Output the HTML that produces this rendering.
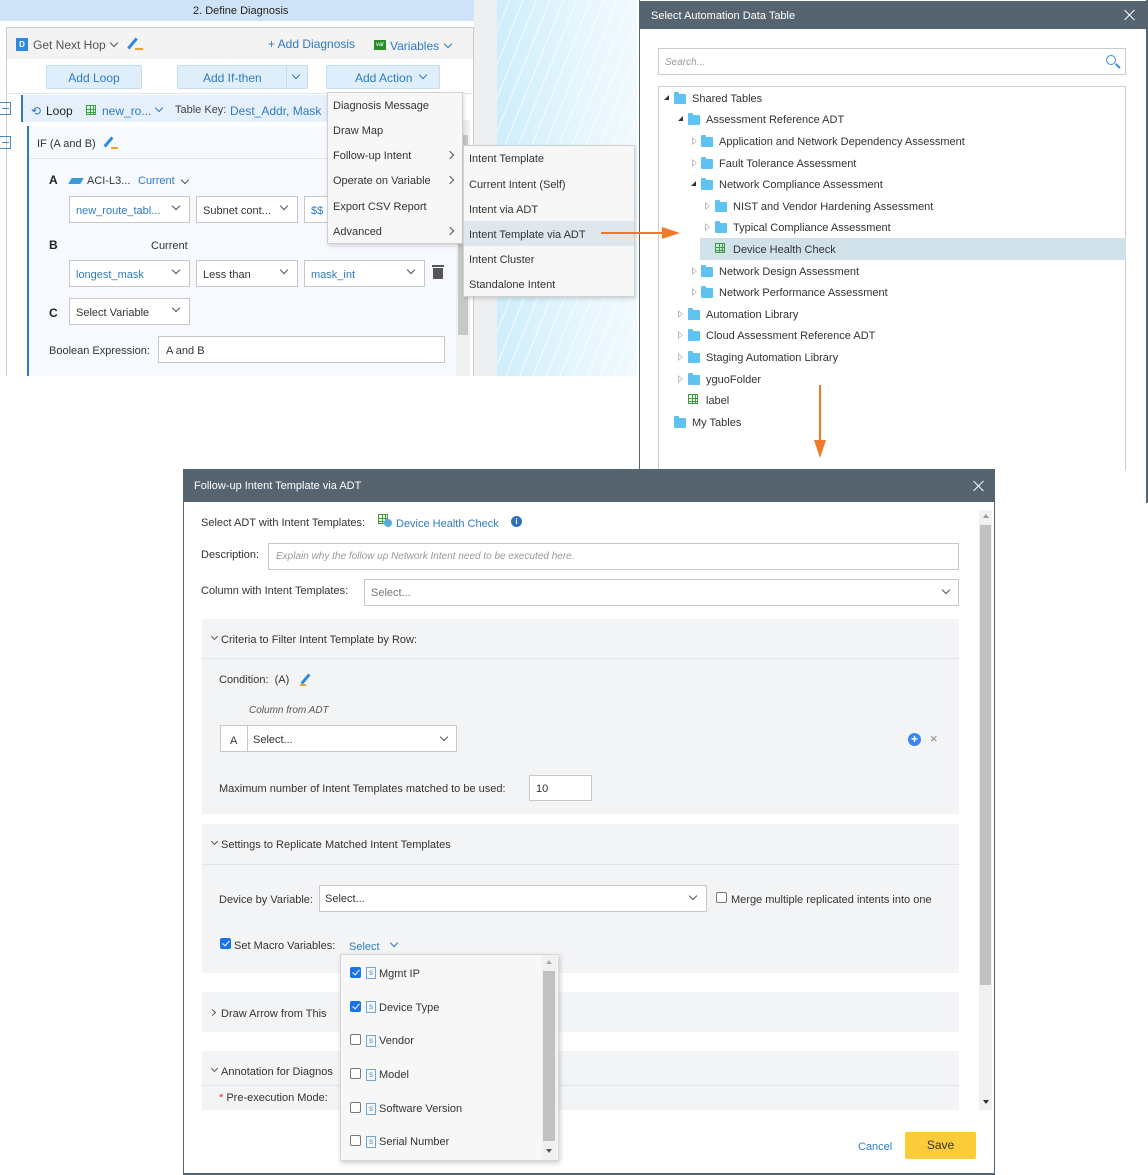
<!DOCTYPE html>
<html><head><meta charset="utf-8">
<style>
*{box-sizing:border-box;margin:0;padding:0}
body{width:1148px;height:1175px;position:relative;background:#fff;font-family:"Liberation Sans",sans-serif;font-size:11px;color:#333;overflow:hidden}
.a{position:absolute;white-space:nowrap}
.blue{color:#2f7bc0}
.box{position:absolute;border:1px solid #c8c8c8;background:#fff}
.chev{position:absolute;width:6px;height:6px;border-right:1.3px solid #555;border-bottom:1.3px solid #555;transform:rotate(45deg)}
.chr{position:absolute;width:6px;height:6px;border-right:1.3px solid #555;border-bottom:1.3px solid #555;transform:rotate(-45deg)}
.fold{position:absolute;width:12px;height:10px;background:#5ec3f2;border-radius:1px}
.fold:before{content:"";position:absolute;left:0;top:-2px;width:5px;height:3px;background:#5ec3f2;border-radius:1px 1px 0 0}
.tri-d{position:absolute;width:0;height:0;border-left:5px solid transparent;border-bottom:5px solid #333}
.tri-r{position:absolute;width:0;height:0;border-top:4px solid transparent;border-bottom:4px solid transparent;border-left:5px solid #bbb}
.tri-r:after{content:"";position:absolute;left:-4px;top:-2px;border-top:2px solid transparent;border-bottom:2px solid transparent;border-left:3px solid #fff}
.btn{position:absolute;background:#dfeefb;border:1px solid #c6dcf1;border-radius:2px;color:#2f7bc0;font-size:12px;text-align:center;line-height:22px}
.cb{position:absolute;width:11px;height:11px;border:1px solid #777;border-radius:2px;background:#fff}
.cbc{position:absolute;width:11px;height:11px;border-radius:2px;background:#1a73e8}
.cbc:after{content:"";position:absolute;left:3.5px;top:1px;width:3px;height:6px;border-right:1.6px solid #fff;border-bottom:1.6px solid #fff;transform:rotate(40deg)}
.sv{position:absolute;width:10px;height:12px;border:1px solid #6aa6d6;color:#4a8cc8;font-size:8px;line-height:10px;text-align:center}
.sec{position:absolute;background:#f3f4f6}
.grid{position:absolute;width:10px;height:10px;border:1px solid #3aa13a;background:linear-gradient(#3aa13a,#3aa13a) 3px 0/1px 10px no-repeat,linear-gradient(#3aa13a,#3aa13a) 6px 0/1px 10px no-repeat,linear-gradient(#3aa13a,#3aa13a) 0 3px/10px 1px no-repeat,linear-gradient(#3aa13a,#3aa13a) 0 6px/10px 1px no-repeat}
.x{position:absolute;width:12px;height:12px}
.x:before,.x:after{content:"";position:absolute;left:5px;top:-1px;width:1.3px;height:14px;background:#fff;transform:rotate(45deg)}
.x:after{transform:rotate(-45deg)}
</style></head><body>

<!-- LEFT PANEL -->
<div class="a" style="left:0;top:0;width:474px;height:21px;background:#cfe3f8"></div>
<div class="a" style="left:193px;top:5px;font-size:11px;color:#222">2. Define Diagnosis</div>
<div class="a" style="left:474px;top:0;width:23px;height:376px;background:#eeeff1"></div>
<div class="a" style="left:497px;top:0;width:140px;height:376px;background:repeating-linear-gradient(112deg,rgba(255,255,255,0) 0 11px,rgba(255,255,255,.55) 11px 12.5px),linear-gradient(90deg,#cdeefb,#e6f6fd 60%,#f0fafe)"></div>
<div class="a" style="left:6px;top:27px;width:468px;height:349px;border-left:1px solid #ccc;border-top:1px solid #ccc;border-right:1px solid #ccc;background:#fff"></div>
<div class="a" style="left:7px;top:28px;width:466px;height:31px;background:#f3f3f3"></div>
<div class="a" style="left:16px;top:38px;width:12px;height:13px;background:#2d8ae0;color:#fff;font-size:8px;font-weight:bold;text-align:center;line-height:13px">D</div>
<div class="a" style="left:33px;top:38px;font-size:12px;color:#555">Get Next Hop</div>
<div class="chev" style="left:111px;top:40px"></div>
<div class="a" style="left:131px;top:37px;width:3px;height:13px;background:#2d8ae0;transform:rotate(40deg)"></div>
<div class="a" style="left:135px;top:48px;width:8px;height:2px;background:#f0a030"></div>
<div class="a blue" style="left:268px;top:37px;font-size:12px">+ Add Diagnosis</div>
<div class="a" style="left:374px;top:40px;width:12px;height:10px;background:#2a8c2a;color:#fff;font-size:6px;line-height:10px;text-align:center">var</div>
<div class="a blue" style="left:390px;top:39px;font-size:12px">Variables</div>
<div class="chev" style="left:445px;top:41px;border-color:#2f7bc0"></div>
<div class="btn" style="left:46px;top:65px;width:96px;height:24px;line-height:24px">Add Loop</div>
<div class="btn" style="left:177px;top:65px;width:131px;height:24px;line-height:24px;text-align:left;padding-left:25px">Add If-then</div>
<div class="a" style="left:286px;top:66px;width:1px;height:22px;background:#c6dcf1"></div>
<div class="chev" style="left:293px;top:72px;border-color:#2f7bc0"></div>
<div class="btn" style="left:326px;top:65px;width:114px;height:24px;line-height:24px;text-align:left;padding-left:28px">Add Action</div>
<div class="chev" style="left:420px;top:72px;border-color:#2f7bc0"></div>
<div class="a" style="left:7px;top:93px;width:466px;height:1px;background:#dde6ef"></div>
<div class="a" style="left:21px;top:95px;width:435px;height:27px;background:#e6f0fb;border-left:2px solid #2f7bc0"></div>
<div class="a" style="left:0;top:102px;width:11px;height:13px;border:1px solid #4a8cc8;border-left:none"></div>
<div class="a" style="left:2px;top:108px;width:7px;height:1px;background:#4a8cc8"></div>
<div class="a" style="left:31px;top:104px;color:#2f7bc0;font-size:12px">⟲</div>
<div class="a" style="left:46px;top:104px;font-size:12px;color:#222">Loop</div>
<div class="grid" style="left:86px;top:105px"></div>
<div class="a blue" style="left:102px;top:104px;font-size:12px">new_ro...</div>
<div class="chev" style="left:156px;top:105px;border-color:#2f7bc0"></div>
<div class="a" style="left:175px;top:104px;font-size:11px;color:#444">Table Key:</div>
<div class="a blue" style="left:230px;top:104px;font-size:12px">Dest_Addr, Mask</div>
<div class="a" style="left:27px;top:126px;width:429px;height:250px;background:#f6f9fd;border-left:2px solid #2f7bc0"></div>
<div class="a" style="left:29px;top:158px;width:427px;height:1px;background:#dde6ef"></div>
<div class="a" style="left:0;top:136px;width:11px;height:13px;border:1px solid #4a8cc8;border-left:none"></div>
<div class="a" style="left:2px;top:142px;width:7px;height:1px;background:#4a8cc8"></div>
<div class="a" style="left:37px;top:138px;font-size:11px;color:#333">IF (A and B)</div>
<div class="a" style="left:107px;top:136px;width:3px;height:12px;background:#2d8ae0;transform:rotate(40deg)"></div>
<div class="a" style="left:111px;top:147px;width:7px;height:2px;background:#f0a030"></div>
<div class="a" style="left:456px;top:120px;width:14px;height:256px;background:#f0f0f0"></div>
<div class="a" style="left:458px;top:135px;width:10px;height:200px;background:#c8c8c8"></div>
<div class="a" style="left:49px;top:173px;font-size:12px;font-weight:bold;color:#222">A</div>
<div class="a" style="left:70px;top:178px;width:12px;height:6px;background:#3a9ad9;transform:skewX(-30deg)"></div>
<div class="a" style="left:87px;top:175px;font-size:11px">ACI-L3...</div>
<div class="a blue" style="left:138px;top:175px;font-size:11px">Current</div>
<div class="chev" style="left:182px;top:177px"></div>
<div class="box" style="left:69px;top:196px;width:121px;height:27px"></div><div class="a blue" style="left:76px;top:205px">new_route_tabl...</div><div class="chev" style="left:173px;top:203px"></div>
<div class="box" style="left:196px;top:196px;width:102px;height:27px"></div><div class="a" style="left:203px;top:205px">Subnet cont...</div><div class="chev" style="left:281px;top:203px"></div>
<div class="box" style="left:304px;top:196px;width:30px;height:27px"></div><div class="a blue" style="left:311px;top:205px">$$</div>
<div class="a" style="left:49px;top:238px;font-size:12px;font-weight:bold;color:#222">B</div>
<div class="a" style="left:151px;top:240px;font-size:11px">Current</div>
<div class="box" style="left:69px;top:260px;width:121px;height:27px"></div><div class="a blue" style="left:76px;top:269px">longest_mask</div><div class="chev" style="left:173px;top:267px"></div>
<div class="box" style="left:196px;top:260px;width:102px;height:27px"></div><div class="a" style="left:203px;top:269px">Less than</div><div class="chev" style="left:281px;top:267px"></div>
<div class="box" style="left:304px;top:260px;width:121px;height:27px"></div><div class="a blue" style="left:311px;top:269px">mask_int</div><div class="chev" style="left:408px;top:267px"></div>
<div class="a" style="left:433px;top:268px;width:10px;height:11px;background:#555;border-radius:0 0 1px 1px"></div><div class="a" style="left:432px;top:265px;width:12px;height:2px;background:#555"></div>
<div class="a" style="left:49px;top:306px;font-size:12px;font-weight:bold;color:#222">C</div>
<div class="box" style="left:69px;top:298px;width:121px;height:27px"></div><div class="a" style="left:76px;top:307px">Select Variable</div><div class="chev" style="left:173px;top:305px"></div>
<div class="a" style="left:49px;top:345px">Boolean Expression:</div>
<div class="box" style="left:158px;top:336px;width:287px;height:27px"></div><div class="a" style="left:166px;top:345px">A and B</div>

<!-- Menus -->
<div class="a" style="left:327px;top:92px;width:136px;height:152px;background:#f7f7f7;border:1px solid #d0d0d0;box-shadow:1px 2px 4px rgba(0,0,0,.15)"></div>
<div class="a" style="left:333px;top:100px">Diagnosis Message</div>
<div class="a" style="left:333px;top:125px">Draw Map</div>
<div class="a" style="left:333px;top:150px">Follow-up Intent</div><div class="chr" style="left:447px;top:152px"></div>
<div class="a" style="left:333px;top:175px">Operate on Variable</div><div class="chr" style="left:447px;top:177px"></div>
<div class="a" style="left:333px;top:201px">Export CSV Report</div>
<div class="a" style="left:333px;top:226px">Advanced</div><div class="chr" style="left:447px;top:228px"></div>
<div class="a" style="left:463px;top:145px;width:172px;height:152px;background:#f7f7f7;border:1px solid #d0d0d0;box-shadow:1px 2px 4px rgba(0,0,0,.15)"></div>
<div class="a" style="left:464px;top:221px;width:170px;height:25px;background:#dfe7ee"></div>
<div class="a" style="left:469px;top:153px">Intent Template</div>
<div class="a" style="left:469px;top:179px">Current Intent (Self)</div>
<div class="a" style="left:469px;top:204px">Intent via ADT</div>
<div class="a" style="left:469px;top:229px">Intent Template via ADT</div>
<div class="a" style="left:469px;top:254px">Intent Cluster</div>
<div class="a" style="left:469px;top:279px">Standalone Intent</div>

<!-- RIGHT DIALOG -->
<div class="a" style="left:639px;top:0;width:509px;height:503px;background:#fff;border-left:1px solid #56646f;border-right:2px solid #56646f"></div>
<div class="a" style="left:639px;top:1px;width:509px;height:28px;background:#56646f"></div>
<div class="a" style="left:651px;top:10px;color:#fff;font-size:11px">Select Automation Data Table</div>
<div class="x" style="left:1124px;top:9px"></div>
<div class="box" style="left:658px;top:48px;width:468px;height:27px;border-color:#ccc"></div>
<div class="a" style="left:665px;top:57px;color:#999;font-style:italic;font-size:10px">Search...</div>
<div class="a" style="left:1106px;top:55px;width:10px;height:10px;border:1.6px solid #3c8ed6;border-radius:50%"></div>
<div class="a" style="left:1115px;top:65px;width:6px;height:1.6px;background:#3c8ed6;transform:rotate(45deg)"></div>
<div class="a" style="left:658px;top:86px;width:468px;height:384px;border:1px solid #ccc;border-bottom:none"></div>
<div class="a" style="left:700px;top:238px;width:426px;height:22px;background:#d0e1ea"></div>

<div class="tri-d" style="left:664px;top:95px"></div><div class="fold" style="left:674px;top:94px"></div><div class="a" style="left:692px;top:93px">Shared Tables</div>
<div class="tri-d" style="left:678px;top:116px"></div><div class="fold" style="left:688px;top:115px"></div><div class="a" style="left:706px;top:114px">Assessment Reference ADT</div>
<div class="tri-r" style="left:692px;top:137px"></div><div class="fold" style="left:701px;top:137px"></div><div class="a" style="left:719px;top:136px">Application and Network Dependency Assessment</div>
<div class="tri-r" style="left:692px;top:159px"></div><div class="fold" style="left:701px;top:159px"></div><div class="a" style="left:719px;top:158px">Fault Tolerance Assessment</div>
<div class="tri-d" style="left:691px;top:181px"></div><div class="fold" style="left:701px;top:180px"></div><div class="a" style="left:719px;top:179px">Network Compliance Assessment</div>
<div class="tri-r" style="left:705px;top:202px"></div><div class="fold" style="left:715px;top:202px"></div><div class="a" style="left:733px;top:201px">NIST and Vendor Hardening Assessment</div>
<div class="tri-r" style="left:705px;top:223px"></div><div class="fold" style="left:715px;top:223px"></div><div class="a" style="left:733px;top:222px">Typical Compliance Assessment</div>
<div class="grid" style="left:715px;top:243px"></div><div class="a" style="left:733px;top:244px">Device Health Check</div>
<div class="tri-r" style="left:692px;top:267px"></div><div class="fold" style="left:701px;top:267px"></div><div class="a" style="left:719px;top:266px">Network Design Assessment</div>
<div class="tri-r" style="left:692px;top:288px"></div><div class="fold" style="left:701px;top:288px"></div><div class="a" style="left:719px;top:287px">Network Performance Assessment</div>
<div class="tri-r" style="left:678px;top:310px"></div><div class="fold" style="left:688px;top:310px"></div><div class="a" style="left:706px;top:309px">Automation Library</div>
<div class="tri-r" style="left:678px;top:331px"></div><div class="fold" style="left:688px;top:331px"></div><div class="a" style="left:706px;top:330px">Cloud Assessment Reference ADT</div>
<div class="tri-r" style="left:678px;top:353px"></div><div class="fold" style="left:688px;top:353px"></div><div class="a" style="left:706px;top:352px">Staging Automation Library</div>
<div class="tri-r" style="left:678px;top:375px"></div><div class="fold" style="left:688px;top:375px"></div><div class="a" style="left:706px;top:374px">yguoFolder</div>
<div class="grid" style="left:688px;top:394px"></div><div class="a" style="left:706px;top:395px">label</div>
<div class="fold" style="left:674px;top:418px"></div><div class="a" style="left:692px;top:417px">My Tables</div>

<!-- arrows -->
<div class="a" style="left:601px;top:232px;width:64px;height:2px;background:#f07a28"></div>
<div class="a" style="left:662px;top:227px;width:0;height:0;border-top:6px solid transparent;border-bottom:6px solid transparent;border-left:18px solid #f07a28"></div>
<div class="a" style="left:819px;top:385px;width:2px;height:58px;background:#f07a28"></div>
<div class="a" style="left:814px;top:440px;width:0;height:0;border-left:6px solid transparent;border-right:6px solid transparent;border-top:18px solid #f07a28"></div>

<!-- BOTTOM DIALOG -->
<div class="a" style="left:183px;top:469px;width:812px;height:706px;background:#fff;border:1px solid #56646f;border-top:none;border-bottom:2px solid #56646f"></div>
<div class="a" style="left:183px;top:469px;width:812px;height:33px;background:#56646f"></div>
<div class="a" style="left:194px;top:480px;color:#fff;font-size:11px">Follow-up Intent Template via ADT</div>
<div class="x" style="left:973px;top:480px"></div>
<div class="a" style="left:979px;top:510px;width:13px;height:600px;background:#f1f1f1"></div>
<div class="a" style="left:980px;top:525px;width:11px;height:460px;background:#c1c1c1"></div>
<div class="a" style="left:983px;top:514px;border-left:3px solid transparent;border-right:3px solid transparent;border-bottom:4px solid #999"></div>
<div class="a" style="left:983px;top:1100px;border-left:3px solid transparent;border-right:3px solid transparent;border-top:4px solid #333"></div>

<div class="a" style="left:201px;top:517px">Select ADT with Intent Templates:</div>
<div class="grid" style="left:378px;top:514px"></div>
<div class="a" style="left:384px;top:519px;width:8px;height:8px;background:#5ba9e0;border-radius:50%"></div>
<div class="a blue" style="left:396px;top:518px">Device Health Check</div>
<div class="a" style="left:511px;top:516px;width:11px;height:11px;background:#2a72c0;border-radius:50%;color:#fff;font-size:8px;font-weight:bold;text-align:center;line-height:11px">i</div>
<div class="a" style="left:201px;top:549px">Description:</div>
<div class="box" style="left:268px;top:543px;width:691px;height:27px"></div>
<div class="a" style="left:276px;top:551px;color:#999;font-style:italic;font-size:10px">Explain why the follow up Network Intent need to be executed here.</div>
<div class="a" style="left:201px;top:585px">Column with Intent Templates:</div>
<div class="box" style="left:364px;top:579px;width:595px;height:27px"></div>
<div class="a" style="left:371px;top:587px;color:#777">Select...</div><div class="chev" style="left:943px;top:587px"></div>

<div class="sec" style="left:202px;top:619px;width:757px;height:195px"></div>
<div class="a" style="left:202px;top:658px;width:757px;height:1px;background:#e1e3e6"></div>
<div class="chev" style="left:212px;top:634px;width:5px;height:5px"></div>
<div class="a" style="left:221px;top:634px;color:#333">Criteria to Filter Intent Template by Row:</div>
<div class="a" style="left:219px;top:674px">Condition:&nbsp; (A)</div>
<div class="a" style="left:304px;top:673px;width:3px;height:12px;background:#2d8ae0;transform:rotate(40deg)"></div>
<div class="a" style="left:300px;top:684px;width:6px;height:2px;background:#f0a030"></div>
<div class="a" style="left:249px;top:705px;font-style:italic;color:#555;font-size:10px">Column from ADT</div>
<div class="box" style="left:220px;top:725px;width:237px;height:27px"></div>
<div class="a" style="left:247px;top:726px;width:1px;height:25px;background:#c8c8c8"></div>
<div class="a" style="left:230px;top:735px">A</div>
<div class="a" style="left:253px;top:734px">Select...</div><div class="chev" style="left:441px;top:734px"></div>
<div class="a" style="left:908px;top:733px;width:13px;height:13px;background:#3a86f0;border-radius:50%;color:#fff;text-align:center;line-height:13px;font-weight:bold;font-size:12px">+</div>
<div class="a" style="left:930px;top:731px;color:#888;font-size:13px">×</div>
<div class="a" style="left:219px;top:783px">Maximum number of Intent Templates matched to be used:</div>
<div class="box" style="left:529px;top:775px;width:63px;height:26px"></div>
<div class="a" style="left:536px;top:783px">10</div>

<div class="sec" style="left:202px;top:824px;width:757px;height:149px"></div>
<div class="a" style="left:202px;top:864px;width:757px;height:1px;background:#e1e3e6"></div>
<div class="chev" style="left:212px;top:839px;width:5px;height:5px"></div>
<div class="a" style="left:221px;top:839px">Settings to Replicate Matched Intent Templates</div>
<div class="a" style="left:219px;top:894px">Device by Variable:</div>
<div class="box" style="left:319px;top:885px;width:388px;height:27px"></div>
<div class="a" style="left:325px;top:893px">Select...</div><div class="chev" style="left:690px;top:893px"></div>
<div class="cb" style="left:716px;top:892px"></div>
<div class="a" style="left:731px;top:894px">Merge multiple replicated intents into one</div>
<div class="cbc" style="left:220px;top:938px"></div>
<div class="a" style="left:234px;top:940px">Set Macro Variables:</div>
<div class="a blue" style="left:349px;top:941px">Select</div><div class="chev" style="left:391px;top:940px;border-color:#2f7bc0"></div>

<div class="sec" style="left:202px;top:992px;width:757px;height:40px"></div>
<div class="chr" style="left:210px;top:1010px;width:5px;height:5px"></div>
<div class="a" style="left:221px;top:1008px">Draw Arrow from This</div>

<div class="sec" style="left:202px;top:1051px;width:757px;height:59px"></div>
<div class="a" style="left:202px;top:1085px;width:757px;height:1px;background:#e1e3e6"></div>
<div class="chev" style="left:212px;top:1066px;width:5px;height:5px"></div>
<div class="a" style="left:221px;top:1066px">Annotation for Diagnos</div>
<div class="a" style="left:219px;top:1092px"><span style="color:#e03030">*</span> Pre-execution Mode:</div>

<div class="a blue" style="left:858px;top:1141px">Cancel</div>
<div class="a" style="left:905px;top:1132px;width:71px;height:27px;background:#fbcb3a;border-radius:2px;text-align:center;line-height:27px;font-size:12px;color:#333">Save</div>

<!-- popup -->
<div class="a" style="left:340px;top:954px;width:219px;height:207px;background:#f7f7f7;border:1px solid #d6d6d6;box-shadow:1px 2px 5px rgba(0,0,0,.2)"></div>
<div class="a" style="left:542px;top:955px;width:15px;height:205px;background:#f0f0f0"></div>
<div class="a" style="left:543px;top:971px;width:12px;height:170px;background:#c1c1c1"></div>
<div class="a" style="left:546px;top:960px;border-left:3px solid transparent;border-right:3px solid transparent;border-bottom:4px solid #aaa"></div>
<div class="a" style="left:546px;top:1149px;border-left:3px solid transparent;border-right:3px solid transparent;border-top:4px solid #555"></div>
<div class="cbc" style="left:350px;top:967px"></div><div class="sv" style="left:366px;top:967px">s</div><div class="a" style="left:379px;top:968px">Mgmt IP</div>
<div class="cbc" style="left:350px;top:1001px"></div><div class="sv" style="left:366px;top:1001px">s</div><div class="a" style="left:379px;top:1002px">Device Type</div>
<div class="cb" style="left:350px;top:1034px"></div><div class="sv" style="left:366px;top:1035px">s</div><div class="a" style="left:379px;top:1035px">Vendor</div>
<div class="cb" style="left:350px;top:1068px"></div><div class="sv" style="left:366px;top:1069px">s</div><div class="a" style="left:379px;top:1069px">Model</div>
<div class="cb" style="left:350px;top:1102px"></div><div class="sv" style="left:366px;top:1103px">s</div><div class="a" style="left:379px;top:1103px">Software Version</div>
<div class="cb" style="left:350px;top:1135px"></div><div class="sv" style="left:366px;top:1136px">s</div><div class="a" style="left:379px;top:1136px">Serial Number</div>

</body></html>
